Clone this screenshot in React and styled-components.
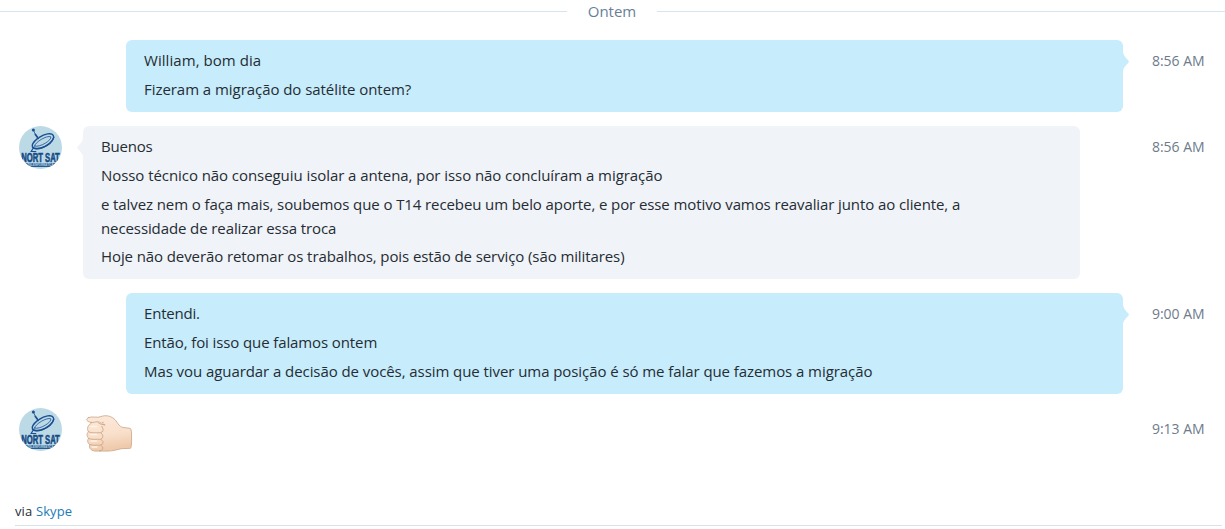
import React from "react";
import styled, { createGlobalStyle } from "styled-components";

const Global = createGlobalStyle`
  * { box-sizing: border-box; }
  body { margin: 0; background: #fff; font-family: "Open Sans", "Noto Sans", sans-serif; color: #252c33; overflow: hidden; }
  p { margin: 0; }
`;

const Page = styled.main`
  width: 1225px;
  height: 529px;
  display: flex;
  flex-direction: column;
`;

const DateDivider = styled.div`
  height: 22px;
  margin-bottom: 18px;
  display: flex;
  align-items: center;
  justify-content: space-between;
  color: #687f98;
  font-size: 15px;
  letter-spacing: 0;
  line-height: 22px;
  &::before, &::after {
    content: "";
    height: 1px;
    background: #d6e4f0;
  }
  &::before { width: 567px; }
  &::after { width: 568px; }
`;

const Thread = styled.section`
  display: flex;
  flex-direction: column;
  gap: 14px;
`;

const Row = styled.article`
  height: ${(p) => p.$height}px;
  display: flex;
  align-items: flex-start;
  padding-left: ${(p) => (p.$own ? 126 : 19)}px;
  padding-right: 20px;
`;

const Bubble = styled.div`
  position: relative;
  width: 997px;
  height: 100%;
  padding: 8.4px 18px 0;
  margin-left: ${(p) => (p.$own ? 0 : 21)}px;
  border-radius: 6px;
  background: ${(p) => (p.$own ? "#c7ecfc" : "#f0f3f8")};
  display: flex;
  flex-direction: column;
  gap: 4.6px;
`;

const Tail = styled.svg`
  position: absolute;
  top: 12px;
  ${(p) => (p.$own ? "right: -6px;" : "left: -6px; transform: scaleX(-1);")}
  width: 7px;
  height: 20px;
  fill: ${(p) => (p.$own ? "#c7ecfc" : "#f0f3f8")};
`;

const Line = styled.p`
  font-size: 15px;
  line-height: 24px;
  white-space: nowrap;
  letter-spacing: ${(p) => p.$track || 0}px;
`;

const Time = styled.time`
  margin-left: auto;
  width: 53px;
  padding-top: 11px;
  font-size: 14px;
  line-height: 20px;
  white-space: nowrap;
  letter-spacing: -0.03px;
  color: #6e7b8c;
`;

const AvatarSvg = styled.svg`
  width: 43px;
  height: 43px;
  flex: none;
`;

const FistSvg = styled.svg`
  width: 48px;
  height: 40px;
  margin: 6px 0 0 23px;
`;

const Footer = styled.footer`
  margin: auto 3px 3px 15px;
  height: 27px;
  padding-top: 1px;
  border-bottom: 1px solid #d9e2ea;
  font-size: 13px;
  line-height: 22px;
  letter-spacing: 0.13px;
`;

const Link = styled.a`
  color: #1d7ab8;
`;

function Avatar() {
  return (
    <AvatarSvg viewBox="0 0 43 43">
      <defs>
        <clipPath id="disc"><circle cx="21.5" cy="21.5" r="21.5" /></clipPath>
      </defs>
      <g clipPath="url(#disc)">
        <rect width="43" height="43" fill="#bcd9e6" />
        <g fill="none" stroke="#1b4f91" strokeLinecap="round">
          <circle cx="14.4" cy="3.9" r="1.5" fill="#1b4f91" stroke="none" />
          <path d="M14.6 4.5 L16.4 8.5" strokeWidth="0.8" />
          <path d="M16.4 8.5 L19.2 12.3" strokeWidth="1.8" />
          <path d="M20.3 11.4 C25.5 7.7 32.5 6.5 34.2 9.3 C36 12.3 31.8 17.5 26 20.3 C20.5 23 14.4 23.5 13.4 20.6 C12.6 18.3 15.5 15 18.4 12.6" strokeWidth="1.4" />
          <path d="M15.6 20 C15.8 16.2 28 9 31.8 10.8 C33.3 13.9 20.7 22 15.6 20 Z" strokeWidth="0.8" />
          <path d="M13.4 21.4 C15.6 25.3 31.5 21.5 34.8 11.2" strokeWidth="1.2" />
          <path d="M13.8 22.8 L12.2 25.5 L16.8 25.5" strokeWidth="1.2" />
        </g>
        <text x="2.2" y="36.3" fontFamily="Liberation Sans, sans-serif" fontWeight="700" fontSize="12.4" textLength="38.6" lengthAdjust="spacingAndGlyphs" fill="#164985" stroke="#164985" strokeWidth="0.55">NORT SAT</text>
        <rect x="4" y="37.1" width="36" height="3.9" fill="#28588c" />
        <text x="8.5" y="40.4" fontFamily="Liberation Sans, sans-serif" fontWeight="700" fontSize="3.6" textLength="26" lengthAdjust="spacingAndGlyphs" fill="#b9d7e6">TELEINFORMÁTICA</text>
      </g>
    </AvatarSvg>
  );
}

function Fist() {
  return (
    <FistSvg viewBox="0 0 48 40" role="img" aria-label="Soquinho">
      <defs>
        <linearGradient id="skin" x1="0" y1="0" x2="0.2" y2="1">
          <stop offset="0" stopColor="#fde9da" />
          <stop offset="0.6" stopColor="#f9e0cc" />
          <stop offset="1" stopColor="#efcaab" />
        </linearGradient>
      </defs>
      <g fill="url(#skin)" stroke="#c5a486" strokeWidth="0.8" strokeLinejoin="round" strokeLinecap="round">
        <path d="M3.5 3.5 C8 2 12 4.2 16 2.6 C20 1 25 1.5 29 4.7 C32.2 7.3 33.7 12.8 38 13.4 L45.3 14.4 Q46.7 15 46.6 24 Q46.7 33 45.5 34.3 L36.5 34.7 C32 35.6 28 37 23 37.1 L10 37.1 C5.4 36.5 3.5 33.4 4.8 30.6 C2.4 29 2 26.2 3.6 24.5 C1.6 22 1.5 19.5 3.5 17.8 C1.7 15.2 2.5 11.2 5.7 9.8 L6.2 8.4 C1.4 7.9 .4 4.8 3.5 3.5 Z" />
      </g>
      <g fill="none" stroke="#c9a180" strokeWidth="0.8" strokeLinecap="round" strokeLinejoin="round">
        <path d="M6.2 8.4 C8.8 8.7 10 8 12 7.6 C14.5 10 17 11 19.8 10.5" />
        <path d="M3.5 17.8 C7 19.6 11 18.6 15.4 18.7 Q18.6 17.9 18.2 15.2 L16.8 12.3" />
        <path d="M3.6 24.5 C7 26 11.5 25.1 15.5 25.3 Q18.5 24.2 17.8 21.3 L16 18.8" />
        <path d="M4.8 30.6 C8 31.8 12 31 15.5 31.2 Q18.8 30.1 18 27.6 L16 25.4" />
        <path d="M16 31.3 Q19 33 17.7 35.1 Q17 36.7 14.5 37" />
        <path d="M13.5 7.6 L16.3 9.1 L18.2 8 L17.7 10.4 L20 11.4" strokeWidth="0.6" />
      </g>
      <g fill="none" stroke="#fff2e7" strokeWidth="1.3" strokeLinecap="round">
        <path d="M6 12.5 H12" />
        <path d="M5.6 20.5 H11.5" />
        <path d="M6 27 H11.5" />
        <path d="M7 33 H12" />
      </g>
    </FistSvg>
  );
}

function OwnMessage({ height, time, children }) {
  return (
    <Row $own $height={height}>
      <Bubble $own>
        <TailShape own />
        {children}
      </Bubble>
      <Time>{time}</Time>
    </Row>
  );
}

function TailShape({ own }) {
  return (
    <Tail $own={own} viewBox="0 0 7 20">
      <path d="M0 0 H1 Q1.5 3.5 4 6 L6.4 8.6 Q7.3 9.7 6.4 10.7 L4 13.2 Q1.5 15.5 1 19 H0 Z" />
    </Tail>
  );
}

export default function App() {
  return (
    <Page>
      <Global />
      <DateDivider>Ontem</DateDivider>
      <Thread>
        <OwnMessage height={72} time="8:56 AM">
          <Line $track={0.06}>William, bom dia</Line>
          <Line $track={-0.05}>Fizeram a migração do satélite ontem?</Line>
        </OwnMessage>
        <Row $height={153}>
          <Avatar />
          <Bubble>
            <TailShape />
            <Line $track={-0.2}>Buenos</Line>
            <Line $track={-0.065}>Nosso técnico não conseguiu isolar a antena, por isso não concluíram a migração</Line>
            <Line $track={-0.1}>
              e talvez nem o faça mais, soubemos que o T14 recebeu um belo aporte, e por esse motivo vamos reavaliar junto ao cliente, a<br />
              necessidade de realizar essa troca
            </Line>
            <Line $track={-0.095}>Hoje não deverão retomar os trabalhos, pois estão de serviço (são militares)</Line>
          </Bubble>
          <Time>8:56 AM</Time>
        </Row>
        <OwnMessage height={101} time="9:00 AM">
          <Line $track={-0.2}>Entendi.</Line>
          <Line $track={-0.11}>Então, foi isso que falamos ontem</Line>
          <Line $track={-0.07}>Mas vou aguardar a decisão de vocês, assim que tiver uma posição é só me falar que fazemos a migração</Line>
        </OwnMessage>
        <Row $height={46}>
          <Avatar />
          <Fist />
          <Time>9:13 AM</Time>
        </Row>
      </Thread>
      <Footer>via <Link>Skype</Link></Footer>
    </Page>
  );
}
